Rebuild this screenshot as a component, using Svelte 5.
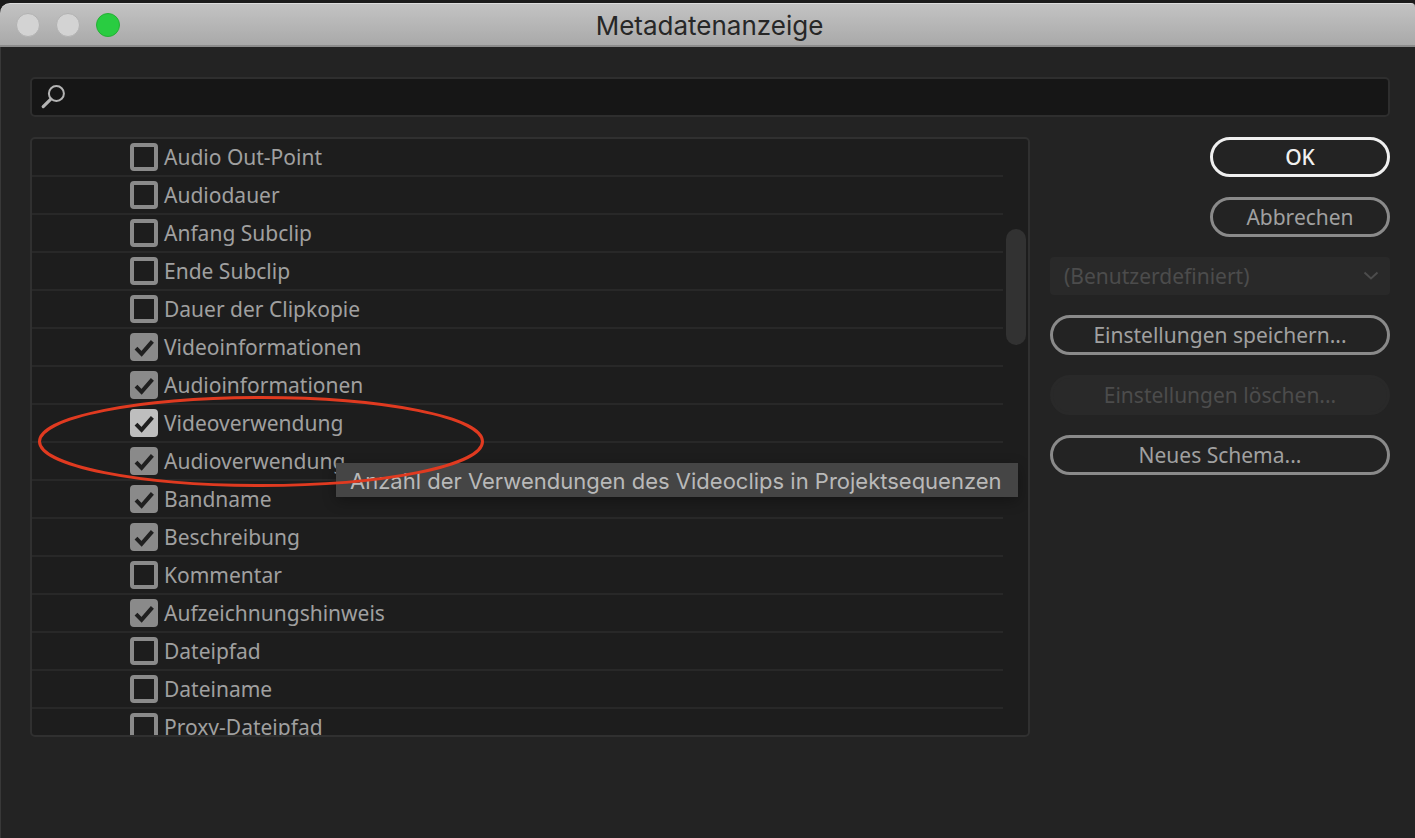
<script>
  let query = $state('');
  let fields = $state([
    { name: 'Audio Out-Point', on: false },
    { name: 'Audiodauer', on: false },
    { name: 'Anfang Subclip', on: false },
    { name: 'Ende Subclip', on: false },
    { name: 'Dauer der Clipkopie', on: false },
    { name: 'Videoinformationen', on: true },
    { name: 'Audioinformationen', on: true },
    { name: 'Videoverwendung', on: true, hot: true, tip: 'Anzahl der Verwendungen des Videoclips in Projektsequenzen' },
    { name: 'Audioverwendung', on: true },
    { name: 'Bandname', on: true },
    { name: 'Beschreibung', on: true },
    { name: 'Kommentar', on: false },
    { name: 'Aufzeichnungshinweis', on: true },
    { name: 'Dateipfad', on: false },
    { name: 'Dateiname', on: false },
    { name: 'Proxy-Dateipfad', on: false }
  ]);
</script>

<div class="window">
  <header class="titlebar">
    <div class="lights">
      <button class="light" aria-label="Schließen"></button>
      <button class="light" aria-label="Minimieren"></button>
      <button class="light zoom" aria-label="Zoomen"></button>
    </div>
    <h1>Metadatenanzeige</h1>
  </header>

  <main>
    <label class="search">
      <svg width="26" height="26" viewBox="0 0 26 26" fill="none" stroke="#b4b4b4" aria-hidden="true">
        <circle cx="16.4" cy="9.5" r="7.5" stroke-width="2" />
        <path d="M10.8 15.2 3.2 22.6" stroke-width="3.2" stroke-linecap="round" />
      </svg>
      <input type="text" aria-label="Suchen" bind:value={query} />
    </label>

    <div class="columns">
      <section class="list">
        <ul>
          {#each fields as field}
            <li>
              <label class:hot={field.hot}>
                <input type="checkbox" bind:checked={field.on} />
                <svg class="tick" width="28" height="28" viewBox="0 0 28 28" aria-hidden="true">
                  <path d="M6 15.2 11.6 20.8 22.4 8.4" fill="none" stroke="#1f1f1f" stroke-width="4" />
                </svg>
                <span>{field.name}</span>
              </label>
              {#if field.tip}
                <div class="tooltip" role="tooltip">{field.tip}</div>
                <svg class="marker" width="448" height="92" viewBox="0 0 448 92" aria-hidden="true">
                  <ellipse cx="224" cy="46.5" rx="221.5" ry="44" fill="none" stroke="#e03a20" stroke-width="3" />
                </svg>
              {/if}
            </li>
          {/each}
        </ul>
        <div class="track"><div class="thumb"></div></div>
      </section>

      <aside>
        <button class="small primary">OK</button>
        <button class="small">Abbrechen</button>
        <div class="picker">
          <select aria-label="Voreinstellung" disabled>
            <option>(Benutzerdefiniert)</option>
          </select>
          <svg width="16" height="10" viewBox="0 0 16 10" aria-hidden="true">
            <path d="M1.5 1.5 8 7.5 14.5 1.5" fill="none" stroke="#4c4c4c" stroke-width="2" />
          </svg>
        </div>
        <button>Einstellungen speichern...</button>
        <button disabled>Einstellungen löschen...</button>
        <button>Neues Schema...</button>
      </aside>
    </div>
  </main>
</div>

<style>
  :global(body) {
    background: #1b1b1b;
  }

  .window,
  .window * {
    box-sizing: border-box;
  }

  .window {
    display: flex;
    flex-direction: column;
    height: 100vh;
    padding-top: 3px;
    color: #a0a0a0;
    font: 21px/28px "Noto Sans", sans-serif;
  }

  button,
  input,
  select {
    margin: 0;
    font: inherit;
    color: inherit;
  }

  .titlebar {
    display: grid;
    grid-template-columns: 1fr auto 1fr;
    align-items: center;
    height: 44px;
    padding: 0 12px 0 16px;
    border-top: 1px solid #dcdcdc;
    border-bottom: 2px solid #8c8c8c;
    border-radius: 10px 4px 0 0;
    background: linear-gradient(#c3c3c3, #a9a9a9);
  }

  .lights {
    display: flex;
    gap: 16px;
  }

  .light {
    width: 24px;
    height: 24px;
    padding: 0;
    border: 1px solid #b2b2b2;
    border-radius: 50%;
    background: #d3d3d3;
  }

  .light.zoom {
    border-color: #25b035;
    background: #29cc41;
  }

  h1 {
    margin: 0;
    padding-top: 2px;
    color: #272727;
    font: 400 26px/32px Inter, sans-serif;
  }

  main {
    display: flex;
    flex: 1;
    flex-direction: column;
    gap: 20px;
    min-height: 0;
    padding: 30px 25px 101px 29px;
    border-left: 1px solid #383838;
    background: #232323;
  }

  .search {
    display: flex;
    flex: none;
    align-items: center;
    gap: 8px;
    height: 40px;
    padding: 0 8px;
    border: 2px solid #2e2e2e;
    border-radius: 5px;
    background: #161616;
  }

  .search input {
    flex: 1;
    border: 0;
    outline: 0;
    background: none;
  }

  .columns {
    display: flex;
    flex: 1;
    gap: 20px;
    min-height: 0;
  }

  .list {
    display: flex;
    flex: 1;
    gap: 3px;
    overflow: hidden;
    border: 2px solid #303030;
    border-radius: 5px;
    background: #1d1d1d;
  }

  ul {
    flex: 1;
    margin: 0;
    padding: 0;
    list-style: none;
  }

  li {
    position: relative;
    height: 38px;
    padding: 4px 0 4px 98px;
    border-bottom: 2px solid #282828;
  }

  li label {
    display: inline-flex;
    align-items: center;
    gap: 6px;
  }

  li input {
    appearance: none;
    width: 28px;
    height: 28px;
    border: 4px solid #8a8a8a;
    border-radius: 4px;
  }

  li input:checked {
    background: #8a8a8a;
  }

  .hot input:checked {
    border-color: #bebebe;
    background: #bebebe;
  }

  .tick {
    display: none;
    margin-left: -34px;
  }

  input:checked + .tick {
    display: block;
  }

  .tooltip {
    position: absolute;
    z-index: 1;
    top: 58px;
    left: 304px;
    padding: 4px 16px 2px 14px;
    background: #454545;
    box-shadow: 0 4px 14px rgb(0 0 0 / 30%);
    color: #b9b9b9;
    font: 22px/28px Inter, sans-serif;
    white-space: nowrap;
  }

  .marker {
    position: absolute;
    z-index: 2;
    top: -10px;
    left: 5px;
  }

  .track {
    width: 22px;
    padding-top: 90px;
  }

  .thumb {
    width: 20px;
    height: 116px;
    border-radius: 10px;
    background: #323232;
  }

  aside {
    display: flex;
    flex-direction: column;
    gap: 20px;
    width: 340px;
  }

  aside button {
    height: 40px;
    padding: 0;
    border: 3px solid #8a8a8a;
    border-radius: 20px;
    background: none;
  }

  aside .small {
    align-self: flex-end;
    width: 180px;
  }

  aside .primary {
    border-color: #f0f0f0;
    color: #f0f0f0;
    font-weight: 500;
  }

  aside button:disabled {
    border-color: #292929;
    background: #292929;
    color: #4c4c4c;
  }

  .picker {
    display: grid;
    align-items: center;
    height: 38px;
  }

  .picker select {
    grid-area: 1 / 1;
    appearance: none;
    width: 100%;
    height: 38px;
    padding: 0 14px;
    border: 0;
    border-radius: 4px;
    background: #292929;
    color: #4c4c4c;
    opacity: 1;
  }

  .picker svg {
    grid-area: 1 / 1;
    justify-self: end;
    margin-right: 11px;
    pointer-events: none;
  }
</style>
